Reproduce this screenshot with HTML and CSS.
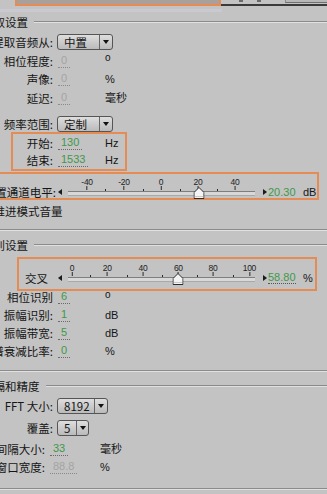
FILE: index.html
```html
<!DOCTYPE html>
<html lang="zh-CN">

<head>
    <meta charset="UTF-8">
    <meta name="viewport" content="width=device-width, initial-scale=1.0">
    <title>中置声道提取</title>
    <link rel="stylesheet" href="styles.css">
</head>

<body>
    <div class="topbar">
        <div class="preset"></div>
        <div class="tools">
            <span class="tool-mark"></span>
            <span class="tool-mark"></span>
            <span class="tool-btn"></span>
        </div>
    </div>
    <div class="strip"></div>

    <!-- 提取设置 -->
    <section class="group g-extract">
        <div class="group-title"><span>提取设置</span><i></i></div>
        <div class="rows first">
            <div class="row">
                <label>提取音频从:</label>
                <div class="select sel-wide"><span>中置</span><b></b></div>
            </div>
            <div class="row">
                <label>相位程度:</label>
                <span class="val off">0</span>
                <span class="unit deg">o</span>
            </div>
            <div class="row">
                <label>声像:</label>
                <span class="val off">0</span>
                <span class="unit">%</span>
            </div>
            <div class="row">
                <label>延迟:</label>
                <span class="val off">0</span>
                <span class="unit">毫秒</span>
            </div>
        </div>
        <div class="row range-row">
            <label>频率范围:</label>
            <div class="select sel-wide"><span>定制</span><b></b></div>
        </div>
        <div class="hl-box freq">
            <div class="row">
                <label>开始:</label>
                <span class="val on">130</span>
                <span class="unit">Hz</span>
            </div>
            <div class="row">
                <label>结束:</label>
                <span class="val on">1533</span>
                <span class="unit">Hz</span>
            </div>
        </div>
        <div class="hl-box slider-box level">
            <div class="slider">
                <label>中置通道电平:</label>
                <i class="arr-l"></i>
                <div class="track">
                    <div class="groove"></div>
                    <span class="tick" style="left: 10.2%">-40</span>
                    <span class="dot" style="left: 19.8%"></span>
                    <span class="tick" style="left: 29.9%">-20</span>
                    <span class="dot" style="left: 40.1%"></span>
                    <span class="tick" style="left: 49.7%">0</span>
                    <span class="dot" style="left: 59.9%"></span>
                    <span class="tick" style="left: 69.5%">20</span>
                    <span class="dot" style="left: 79.7%"></span>
                    <span class="tick" style="left: 89.3%">40</span>
                    <svg class="thumb" style="left: 70.3%" width="11" height="12" viewBox="0 0 11 12">
                        <path d="M5.5 .5 L10.5 5.5 V11.5 H.5 V5.5 Z" fill="#f4f4f4" stroke="#2c2c2c" />
                        <path d="M1.5 9.5 H9.5" stroke="#c8c8c8" />
                    </svg>
                </div>
                <i class="arr-r"></i>
                <span class="read">20.30</span>
                <span class="read-unit">dB</span>
            </div>
        </div>
        <div class="check-line">推进模式音量</div>
    </section>

    <!-- 鉴别设置 -->
    <section class="group g-disc">
        <div class="group-title"><span>鉴别设置</span><i></i></div>
        <div class="hl-box slider-box cross">
            <div class="slider">
                <label>交叉</label>
                <i class="arr-l"></i>
                <div class="track">
                    <div class="groove"></div>
                    <span class="tick" style="left: 2.1%">0</span>
                    <span class="dot" style="left: 11.8%"></span>
                    <span class="tick" style="left: 21%">20</span>
                    <span class="dot" style="left: 31.4%"></span>
                    <span class="tick" style="left: 40.1%">40</span>
                    <span class="dot" style="left: 50.3%"></span>
                    <span class="tick" style="left: 59%">60</span>
                    <span class="dot" style="left: 69%"></span>
                    <span class="tick" style="left: 77.5%">80</span>
                    <span class="dot" style="left: 88%"></span>
                    <span class="tick" style="left: 97%">100</span>
                    <svg class="thumb" style="left: 58.6%" width="11" height="12" viewBox="0 0 11 12">
                        <path d="M5.5 .5 L10.5 5.5 V11.5 H.5 V5.5 Z" fill="#f4f4f4" stroke="#2c2c2c" />
                        <path d="M1.5 9.5 H9.5" stroke="#c8c8c8" />
                    </svg>
                </div>
                <i class="arr-r"></i>
                <span class="read dotted">58.80</span>
                <span class="read-unit">%</span>
            </div>
        </div>
        <div class="rows disc">
            <div class="row">
                <label>相位识别</label>
                <span class="val on">6</span>
                <span class="unit deg">o</span>
            </div>
            <div class="row">
                <label>振幅识别:</label>
                <span class="val on">1</span>
                <span class="unit">dB</span>
            </div>
            <div class="row">
                <label>振幅带宽:</label>
                <span class="val on">5</span>
                <span class="unit">dB</span>
            </div>
            <div class="row">
                <label>频谱衰减比率:</label>
                <span class="val on">0</span>
                <span class="unit">%</span>
            </div>
        </div>
    </section>

    <!-- 间隔和精度 -->
    <section class="group g-fft">
        <div class="group-title"><span>间隔和精度</span><i></i></div>
        <div class="row fft-row">
            <label>FFT 大小:</label>
            <div class="select sel-fft"><span>8192</span><b></b></div>
        </div>
        <div class="row overlap-row">
            <label>覆盖:</label>
            <div class="select sel-small"><span>5</span><b></b></div>
        </div>
        <div class="row tight interval-row">
            <label>间隔大小:</label>
            <span class="val on">33</span>
            <span class="unit">毫秒</span>
        </div>
        <div class="row tight">
            <label>窗口宽度:</label>
            <span class="val off">88.8</span>
            <span class="unit">%</span>
        </div>
    </section>
</body>

</html>
```

FILE: styles.css
```css
* {
    box-sizing: border-box;
}

body {
    margin: 0;
    width: 327px;
    height: 494px;
    overflow: hidden;
    background: #c3c3c3;
    color: #151515;
    font-family: "Noto Sans CJK SC", "Noto Sans", sans-serif;
    font-size: 11.5px;
    line-height: 16px;
}

/* top toolbar remains */
.topbar {
    display: flex;
    height: 6px;
}

.preset {
    margin-left: 15px;
    width: 206px;
    border: 2px solid #e58c55;
    border-top: 0;
    background: #a99f9b;
}

.tools {
    flex: 1;
    display: flex;
    align-items: flex-start;
    padding-left: 18px;
    border-bottom: 2px solid #3a3a3a;
}

.tool-mark {
    width: 4px;
    height: 2px;
    margin-right: 14px;
    background: #6a6a6a;
}

.tool-btn {
    margin-left: auto;
    width: 42px;
    height: 3px;
    border-left: 1px solid #8a8a8a;
    border-bottom: 1px solid #6f6f6f;
    background: #b8b8b8;
}

.strip {
    height: 8px;
    padding-top: 3px;
}

.strip::before {
    content: "";
    display: block;
    width: 222px;
    height: 3px;
    background: #cac9d2;
}

/* groups */
.group {
    border-bottom: 1px solid #8b8b8b;
    box-shadow: 0 1px 0 #e0e0e0;
}

.group-title {
    display: flex;
    align-items: center;
    height: 16px;
    margin-left: -18px;
    white-space: nowrap;
}

.group-title i {
    flex: 1;
    height: 2px;
    margin-left: 6px;
    border-top: 1px solid #8b8b8b;
    border-bottom: 1px solid #e0e0e0;
}

.g-extract {
    padding-bottom: 9px;
}

.g-disc {
    padding-top: 7px;
    padding-bottom: 10px;
}

.g-fft {
    padding-top: 7px;
    padding-bottom: 12px;
}

/* label / value rows */
.row {
    --lw: 53px;
    --vw: 44px;
    display: grid;
    grid-template-columns: var(--lw) var(--vw) auto;
    column-gap: 4px;
    align-items: center;
    height: 18px;
}

.row label,
.slider label {
    display: flex;
    justify-content: flex-end;
    white-space: nowrap;
}

.rows.first {
    margin-top: 3px;
}

.rows.first .row {
    height: 18.5px;
}

.range-row {
    margin-top: 8px;
    height: 17px;
}

.row.tight {
    --lw: 45px;
    --vw: 47px;
}

.fft-row {
    margin-top: 3px;
}

.overlap-row {
    margin-top: 4px;
}

.interval-row {
    margin-top: 3px;
}

.rows.disc {
    margin-top: -3px;
}

.val {
    justify-self: start;
    margin-left: 1px;
    padding: 0 3px;
    border-bottom: 1px dotted #6a6a6a;
    font-family: "Liberation Sans", sans-serif;
    font-size: 11px;
    line-height: 13px;
}

.val.on {
    color: #41984a;
}

.val.off {
    color: #a3a3a3;
    border-bottom-color: #8a8a8a;
}

.unit {
    justify-self: start;
    font-family: "Liberation Sans", "Noto Sans CJK SC", sans-serif;
    font-size: 11px;
}

.unit.deg {
    margin-bottom: 5px;
    font-size: 10px;
    line-height: 10px;
}

/* dropdowns */
.select {
    grid-column: 2 / 4;
    justify-self: start;
    display: flex;
    height: 16px;
    border: 1px solid #555;
    border-radius: 3px;
    background: linear-gradient(#dedede, #bababa);
    line-height: 14px;
}

.select span {
    flex: 1;
    padding-left: 6px;
    font-size: 11.5px;
}

.select b {
    display: flex;
    align-items: center;
    justify-content: center;
    width: 13px;
    border-left: 1px solid #666;
}

.select b::before {
    content: "";
    border-left: 3px solid transparent;
    border-right: 3px solid transparent;
    border-top: 4px solid #111;
}

.sel-wide {
    width: 56px;
}

.sel-fft {
    width: 51px;
}

.sel-small {
    width: 32px;
}

.sel-small b {
    width: 12px;
}

/* highlighted boxes */
.hl-box {
    border: 2px solid #e58c55;
}

.freq {
    --lw: 40px;
    margin-left: 11px;
    width: 116px;
    padding-bottom: 1px;
}

.freq .row {
    --lw: 40px;
    height: 17px;
}

.level {
    margin-top: 1px;
    margin-left: -4px;
    width: 323px;
}

.level label {
    width: 58px;
}

.level .arr-l {
    margin-left: 2px;
}

.cross {
    margin-top: 4px;
    margin-left: 17px;
    width: 300px;
    padding: 1px 0 5px;
}

.cross label {
    width: 29px;
}

.cross .arr-l {
    margin-left: 10px;
}

.check-line {
    margin: 2px 0 0 -6.5px;
    height: 18px;
    line-height: 18px;
    white-space: nowrap;
}

/* sliders */
.slider {
    display: flex;
    align-items: flex-end;
    height: 24px;
    line-height: 12px;
}

.arr-l,
.arr-r {
    width: 0;
    height: 0;
    margin-bottom: 3px;
    border-top: 3px solid transparent;
    border-bottom: 3px solid transparent;
}

.arr-l {
    border-right: 4px solid #1a1a1a;
}

.arr-r {
    margin-left: 8px;
    border-left: 4px solid #1a1a1a;
}

.track {
    position: relative;
    width: 187px;
    height: 24px;
    margin-left: 6px;
}

.groove {
    position: absolute;
    left: 0;
    right: 0;
    top: 17px;
    height: 5px;
    border-top: 1px solid #7e7e7e;
    border-bottom: 1px solid #a9a9a9;
    background: #d8d8d8;
}

.tick {
    position: absolute;
    top: 4px;
    transform: translateX(-50%);
    font-family: "Liberation Sans", sans-serif;
    font-size: 8.5px;
    line-height: 8px;
    letter-spacing: -0.3px;
    color: #222;
}

.tick::after {
    content: "";
    display: block;
    width: 1px;
    height: 4px;
    margin: 0 auto;
    background: #2a2a2a;
}

.dot {
    position: absolute;
    top: 15px;
    width: 1px;
    height: 2px;
    background: #2a2a2a;
}

.thumb {
    position: absolute;
    top: 13px;
    transform: translateX(-50%);
}

.read {
    width: 31px;
    margin-left: 1px;
    font-family: "Liberation Sans", sans-serif;
    font-size: 11px;
    color: #41984a;
}

.read.dotted {
    width: 28px;
    margin-right: 3px;
    border-bottom: 1px dotted #555;
}

.read-unit {
    margin-left: 4px;
    font-family: "Liberation Sans", sans-serif;
    font-size: 11px;
}
```
